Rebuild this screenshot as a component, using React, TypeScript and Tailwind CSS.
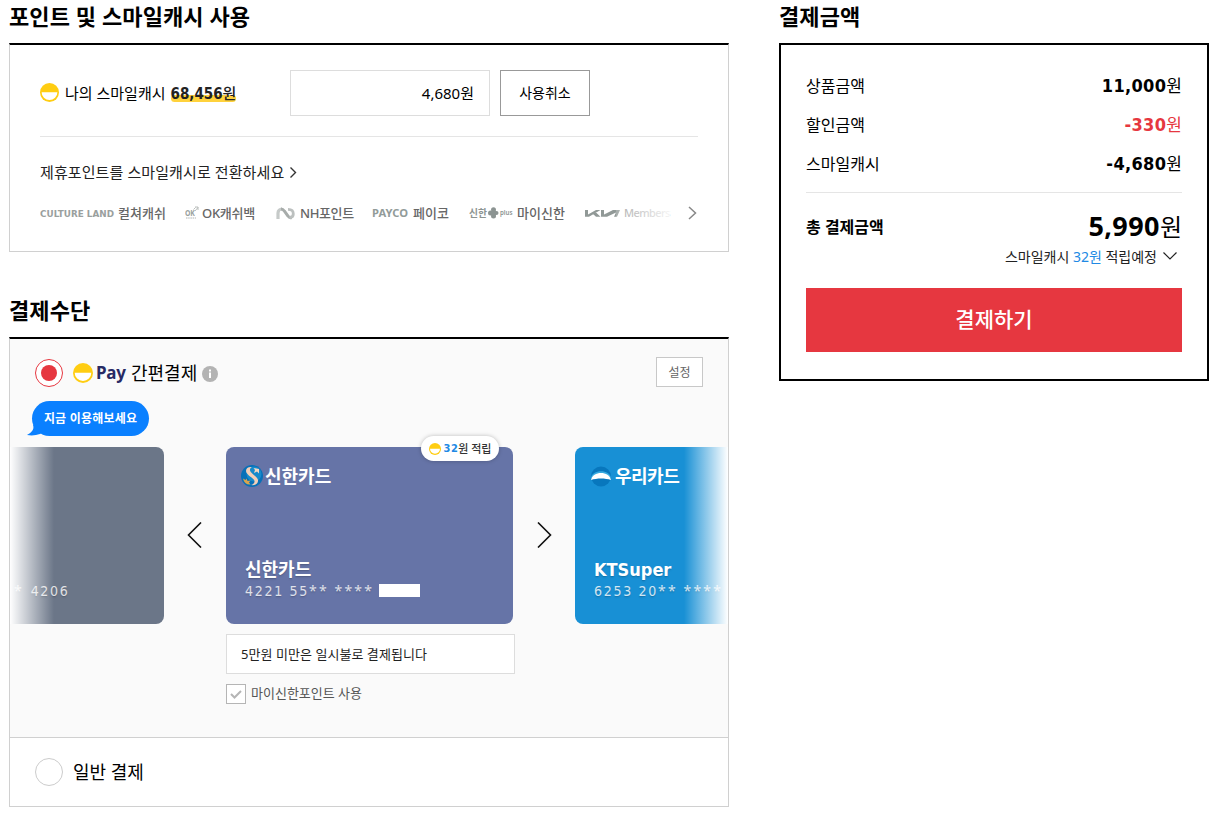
import type { ReactNode } from 'react'
import clsx from 'clsx'

const NUM = "font-['DejaVu_Sans_Condensed','Noto_Sans_CJK_KR',sans-serif]"

function SmileIcon({ size }: { size: number }) {
  return (
    <svg width={size} height={size} viewBox="0 0 20 20" className="shrink-0">
      <circle cx="10" cy="10" r="10" fill="#ffcd12" />
      <path d="M1.700 9.700h16.600a8.300 8.300 0 0 1-16.600 0z" fill="#fff" />
    </svg>
  )
}

function Chevron({ width, height, d, color, stroke }: { width: number; height: number; d: string; color: string; stroke: number }) {
  return (
    <svg width={width} height={height} viewBox={`0 0 ${width} ${height}`} fill="none" stroke={color} strokeWidth={stroke} className="shrink-0">
      <path d={d} />
    </svg>
  )
}

function SectionTitle({ children }: { children: ReactNode }) {
  return <h2 className="h-[43px] pt-px text-[22px] leading-[30px] font-bold tracking-[0.1px] whitespace-nowrap">{children}</h2>
}

function PartnerList() {
  return (
    <div className="mt-[21px] flex h-5 items-center text-[13px] leading-5 font-medium whitespace-nowrap text-[#666]">
      <div className="flex w-[145px] items-center">
        <svg width="75" height="10" viewBox="0 0 75 10" className="mr-[3px] shrink-0">
          <text x="0" y="8.5" textLength="74" lengthAdjust="spacingAndGlyphs" fontFamily="DejaVu Sans" fontWeight="700" fontSize="9" fill="#9aa09e">CULTURE LAND</text>
        </svg>
        컬쳐캐쉬
      </div>
      <div className="flex w-[91px] items-center tracking-[-0.3px]">
        <svg width="14" height="14" viewBox="0 0 14 14" className="mr-[3px] shrink-0">
          <text x="0" y="9.5" textLength="9.5" lengthAdjust="spacingAndGlyphs" fontFamily="Noto Sans" fontWeight="700" fontSize="8" fill="#999f9d">OK</text>
          <path d="M8.5 3.5l2-2M10 5l3-3.5M10 1h3v3" stroke="#a8adab" strokeWidth="0.8" fill="none" />
          <path d="M1 12h10" stroke="#b2b6b4" strokeWidth="1" strokeDasharray="1.5 0.7" />
        </svg>
        OK캐쉬백
      </div>
      <div className="flex w-24 items-center tracking-[-0.4px]">
        <svg width="20" height="13" viewBox="0 0 20 13" className="mr-1 shrink-0" fill="none">
          <path d="M2 12V6a4 4 0 0 1 4-4" stroke="#c6cac9" strokeWidth="3.200" />
          <path d="M5 2c1.500 0 2.500.8 3.300 2L12 9c1 1.500 2 2 3.500 1.500" stroke="#a7acaa" strokeWidth="3" />
          <path d="M13.500 10.500c3 0 3.800-1.500 3.800-3.500C17.300 4 16 2.300 12 2.300" stroke="#bcc0bf" strokeWidth="2.800" />
        </svg>
        NH포인트
      </div>
      <div className="flex w-[97px] items-center">
        <svg width="38" height="14" viewBox="0 0 38 14" className="mr-[3px] shrink-0">
          <text x="0" y="11" textLength="36" lengthAdjust="spacingAndGlyphs" fontFamily="Noto Sans" fontWeight="700" fontSize="11" fill="#929b99">PAYCO</text>
        </svg>
        페이코
      </div>
      <div className="flex w-[115px] items-center">
        <svg width="44" height="14" viewBox="0 0 44 14" className="mr-1 shrink-0">
          <text x="0" y="10.5" textLength="18" lengthAdjust="spacingAndGlyphs" fontFamily="Noto Sans CJK KR" fontWeight="700" fontSize="10" fill="#8c9492">신한</text>
          <g fill="#8c9492">
            <circle cx="24.500" cy="3.800" r="2.500" />
            <circle cx="24.500" cy="10" r="2.500" />
            <circle cx="21.500" cy="7" r="2.500" />
            <circle cx="27.500" cy="7" r="2" />
            <path d="M22 5h5v4h-5z" />
          </g>
          <text x="31" y="9" textLength="12.500" lengthAdjust="spacingAndGlyphs" fontFamily="Noto Sans" fontWeight="600" fontSize="6.500" fill="#8c9492">plus</text>
        </svg>
        마이신한
      </div>
      <div className="relative flex w-[86px] items-center text-[11px] tracking-[-0.600px] text-[#999]">
        <svg width="35" height="9" viewBox="0 0 35 9" className="mr-1 ml-px shrink-0" fill="#919997">
          <path d="M0 1h3v4.500L11 1h4.500L4 7.800H0zM7.500 4.500l3-1.500 5 4.800h-4.500zM16 1h3v4.500L28 1h7L32 7.800h-3L31 3.500 22 7.800h-6z" />
        </svg>
        Members
        <div className="absolute inset-y-0 right-0 w-[54px] bg-linear-to-r from-white/20 to-white/90" />
      </div>
      <div className="ml-auto pr-px">
        <Chevron width={9} height={14} d="M1 1l6.500 6L1 13" color="#888" stroke={1.5} />
      </div>
    </div>
  )
}

function PointSection() {
  return (
    <section>
      <SectionTitle>포인트 및 스마일캐시 사용</SectionTitle>
      <div className="h-[209px] border border-t-2 border-[#d0d0d0] border-t-black px-[30px] pt-[25px] text-[15px]">
        <div className="flex h-[67px] items-start border-b border-[#e5e5e5]">
          <div className="flex h-[45px] w-[250px] items-center whitespace-nowrap">
            <SmileIcon size={19} />
            <span className="mt-px ml-[6px]">나의 스마일캐시</span>
            <span className="relative mt-[2px] ml-[5px]">
              <span className="absolute inset-x-0 bottom-[3px] h-[7px] rounded-sm bg-[#ffd23c]" />
              <span className="relative text-[#222]">
                <b className={NUM}>68,456</b>
                <span className="font-medium">원</span>
              </span>
            </span>
          </div>
          <div className="flex h-[46px] w-[200px] items-center justify-end border border-[#ddd] pr-[15px]">4,680원</div>
          <button className="ml-[10px] h-[46px] w-[90px] border border-[#999] pb-[2px] text-[14px]">사용취소</button>
        </div>
        <div className="mt-[25px] flex h-5 items-center gap-[6px] tracking-[0.1px] whitespace-nowrap text-[#222]">
          제휴포인트를 스마일캐시로 전환하세요
          <Chevron width={7} height={11} d="M0.500 0.500l5 5-5 5" color="#333" stroke={1.4} />
        </div>
        <PartnerList />
      </div>
    </section>
  )
}

interface CardProps {
  className: string
  brand?: ReactNode
  name?: string
  number: ReactNode
}

function PayCard({ className, brand, name, number }: CardProps) {
  return (
    <div className={clsx('flex h-[177px] shrink-0 flex-col pt-[17px] text-white', className)}>
      <div className="flex h-6 items-center">{brand}</div>
      <div className={clsx('mt-[70px] h-6 text-[18px] leading-6 font-bold text-shadow-sm', NUM)}>{name}</div>
      <div className={clsx('-mt-px flex h-5 items-center text-[14px] leading-5 tracking-[1.700px] text-white/80 text-shadow-sm', NUM)}>
        <span className="whitespace-pre">{number}</span>
      </div>
    </div>
  )
}

// Noto's asterisks are as wide as the digits around them
function Mask({ children }: { children: string }) {
  return <span className="font-['Noto_Sans',sans-serif] tracking-[2.200px]">{children}</span>
}

function ShinhanLogo() {
  return (
    <svg width="22" height="22" viewBox="0 0 22 22">
      <circle cx="11" cy="11" r="11" fill="#0870b8" />
      <circle cx="13" cy="9" r="7.500" fill="#168acb" />
      <path d="M11 2C7.500 1.500 5 3 5 6c0 4 8 7 8.500 10 .3 2-1.500 3.700-4 4 4.500.8 8-1.500 7.500-5C16.500 11.500 9.500 8.500 9 5.500 8.800 4 9.500 2.800 11 2z" fill="#f2cfb8" />
      <path d="M12.500 3l5.500 1 0 4.500-2-2-3 1.500 1-3z" fill="#f3d6c2" />
      <path d="M2 13.500l2.500 1.500 1-1.500 1 2.500 3-.5-1.500 2 1.500 2c-3.500.5-6.500-1.500-7.500-6z" fill="#d9a44e" />
    </svg>
  )
}

function WooriLogo() {
  return (
    <svg width="20" height="21" viewBox="0 0 20 21">
      <circle cx="10" cy="10.500" r="10" fill="#0877bd" />
      <path d="M0 12C1 3 19 3 20 12z" fill="#36a9df" />
      <path d="M0 14C1.500 4.500 18.500 4.500 20 14c-6-2-14-2-20 0z" fill="#fff" />
    </svg>
  )
}

function Carousel() {
  return (
    <div className="relative mt-[11px] flex h-[177px] overflow-x-clip">
      <PayCard
        className="w-[154px] rounded-r-lg bg-[#6b7688] pl-1"
        number={
          <>
            <Mask>*</Mask> <span className="ml-px">4206</span>
          </>
        }
      />
      <button className="flex w-[62px] shrink-0 items-center justify-center pr-px pb-[2px]">
        <Chevron width={15} height={26} d="M14 0.500L1.500 13L14 25.500" color="#111" stroke={1.6} />
      </button>
      <div className="relative shrink-0">
        <PayCard
          className="w-[287px] rounded-lg bg-[#6674a7] pl-[19px]"
          brand={
            <div className="-ml-1 flex items-center gap-[2px] text-[18px] font-bold">
              <ShinhanLogo />
              신한카드
            </div>
          }
          name="신한카드"
          number={
            <>
              4221 55<Mask>**</Mask> <Mask>****</Mask>
              <span className="ml-[5px] inline-block h-[13px] w-[41px] bg-white align-[-1px]" />
            </>
          }
        />
        <div className="absolute -top-[11px] left-[195px] flex h-[25px] w-[78px] items-center justify-center rounded-full bg-white pt-px text-[11px] leading-5 whitespace-nowrap text-[#333] shadow-[0_0_4px_rgba(0,0,0,0.25)]">
          <SmileIcon size={12} />
          <b className={clsx('ml-[3px] tracking-[0.400px] text-[#2189e4]', NUM)}>32</b>
          <span className="font-medium">원 적립</span>
        </div>
      </div>
      <button className="flex w-[62px] shrink-0 items-center justify-center pb-[2px] pl-px">
        <Chevron width={15} height={26} d="M1 0.500L13.500 13L1 25.500" color="#111" stroke={1.6} />
      </button>
      <PayCard
        className="w-[287px] rounded-lg bg-[#1890d5] pl-[19px]"
        brand={
          <div className="-ml-[3px] flex items-center gap-1 pt-px text-[18px] font-bold tracking-[-0.500px]">
            <WooriLogo />
            우리카드
          </div>
        }
        name="KTSuper"
        number={
          <>
            6253 20<Mask>**</Mask> <Mask>****</Mask>
          </>
        }
      />
      <div className="absolute top-0 left-0 h-full w-[44px] bg-linear-to-r from-white to-transparent" />
      <div className="absolute top-0 right-0 h-full w-[44px] bg-linear-to-l from-white to-transparent" />
    </div>
  )
}

function PaymentSection() {
  return (
    <section className="mt-[42px]">
      <SectionTitle>결제수단</SectionTitle>
      <div className="h-[470px] border border-t-2 border-[#d0d0d0] border-t-black">
        <div className="h-[399px] border-b border-[#d0d0d0] bg-[#fafafa] pt-[18px]">
          <div className="flex h-[30px] items-center pr-[25px] pl-[25px] whitespace-nowrap">
            <span className="mt-[2px] flex size-7 items-center justify-center rounded-full border border-[#e63740] bg-white">
              <span className="size-4 rounded-full bg-[#e63740]" />
            </span>
            <span className="mt-[2px] ml-[10px] flex items-center">
              <SmileIcon size={20} />
              <span className="ml-[3px] w-[35px] font-['Noto_Sans',sans-serif] text-[17px] leading-6 font-bold tracking-[-0.300px] text-[#282a64]">Pay</span>
              <span className="text-[18px] leading-6">간편결제</span>
              <svg width="16" height="16" viewBox="0 0 16 16" className="mt-px ml-[5px]">
                <circle cx="8" cy="8" r="8" fill="#b3b3b3" />
                <path d="M7 3.500h2v2H7zM7 6.500h2V12H7z" fill="#fff" />
              </svg>
            </span>
            <button className="ml-auto h-[30px] w-[47px] border border-[#c8c8c8] bg-white pt-px text-[12px] text-[#666]">설정</button>
          </div>
          <div className="relative mt-[14px] ml-[22px] flex h-[35px] w-[117px] items-center justify-center rounded-full bg-[#0a80ff] pt-px text-[12px] font-bold tracking-[0.200px] whitespace-nowrap text-white">
            <svg width="22" height="12" viewBox="0 0 22 12" className="absolute bottom-0 -left-[5px]">
              <path d="M6 1C8 6 3 9.500 0 11c5 .8 9 .3 13-1L20 6z" fill="#0a80ff" />
            </svg>
            <span className="relative">지금 이용해보세요</span>
          </div>
          <Carousel />
          <div className="mt-[10px] ml-[216px] flex h-10 w-[289px] items-center border border-[#ddd] bg-white pt-[2px] pl-[14px] text-[13px] tracking-[0.050px] text-[#222]">
            5만원 미만은 일시불로 결제됩니다
          </div>
          <div className="mt-[10px] ml-[216px] flex h-5 items-center gap-[5px] text-[13px] whitespace-nowrap text-[#555]">
            <span className="flex size-5 items-center justify-center border border-[#b5b5b5] bg-white">
              <svg width="12" height="9" viewBox="0 0 12 9" fill="none" stroke="#b5b5b5" strokeWidth="2">
                <path d="M1 4l3.500 3.500L11 1" />
              </svg>
            </span>
            마이신한포인트 사용
          </div>
        </div>
        <div className="flex h-[68px] items-center gap-[10px] pl-[25px] text-[18px]">
          <span className="size-7 rounded-full border border-[#ccc]" />
          일반 결제
        </div>
      </div>
    </section>
  )
}

function AmountRow({ label, value, red }: { label: string; value: string; red?: boolean }) {
  return (
    <div className="flex h-[39px] items-center justify-between">
      <span className="text-[16px]">{label}</span>
      <span className={clsx('text-[17px]', red && 'text-[#e63740]')}>
        <b className={clsx('text-[18px] tracking-[0.350px]', NUM)}>{value}</b>원
      </span>
    </div>
  )
}

function Summary() {
  return (
    <aside className="w-[430px]">
      <SectionTitle>결제금액</SectionTitle>
      <div className="h-[338px] border-2 border-black px-[25px] pt-[21px]">
        <div className="h-[127px] border-b border-[#e5e5e5]">
          <AmountRow label="상품금액" value="11,000" />
          <AmountRow label="할인금액" value="-330" red />
          <AmountRow label="스마일캐시" value="-4,680" />
        </div>
        <div className="mt-[13px] flex h-10 items-center justify-between whitespace-nowrap">
          <span className="pt-px text-[16px] font-bold">총 결제금액</span>
          <span className="text-[24px] leading-10">
            <b className="text-[27px] tracking-[0.400px]">5,990</b>원
          </span>
        </div>
        <div className="flex h-5 items-center justify-end pr-[5px] text-[14px] whitespace-nowrap text-[#222]">
          <span>
            스마일캐시 <span className="text-[#2189e4]">32원</span> 적립예정
          </span>
          <span className="ml-[6px]">
            <Chevron width={14} height={8} d="M0.500 0.500L7 7L13.500 0.500" color="#222" stroke={1.2} />
          </span>
        </div>
        <button className="mt-[22px] h-16 w-full bg-[#e63740] text-[21px] font-medium text-white">결제하기</button>
      </div>
    </aside>
  )
}

export default function App() {
  return (
    <main className="flex h-[817px] w-[1220px] items-start gap-[50px] overflow-hidden bg-white pl-[9px] font-['Noto_Sans','Noto_Sans_CJK_KR',sans-serif] text-black">
      <div className="w-[720px]">
        <PointSection />
        <PaymentSection />
      </div>
      <Summary />
    </main>
  )
}
